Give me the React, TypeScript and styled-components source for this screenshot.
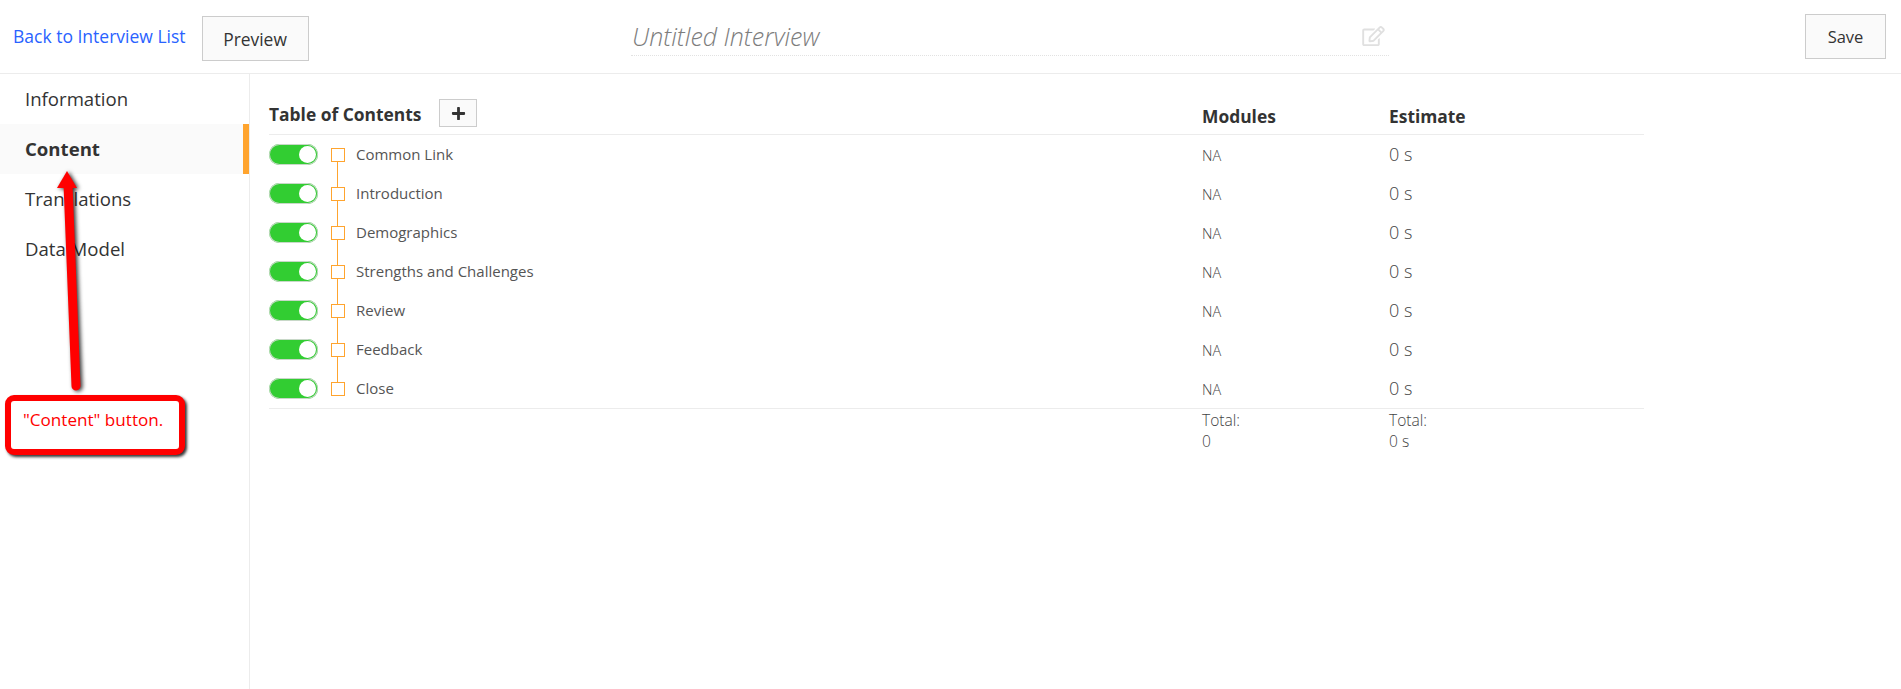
import styled, { createGlobalStyle } from "styled-components";
import { FaRegEdit, FaPlus } from "react-icons/fa";

const GlobalStyle = createGlobalStyle`
  html, body {
    margin: 0;
    height: 100%;
    background: #fff;
    font-family: "Open Sans", "Liberation Sans", sans-serif;
    color: #333;
    overflow: hidden;
  }
  #root {
    height: 100%;
  }
`;

const Page = styled.div`
  position: relative;
  height: 100%;
  display: flex;
  flex-direction: column;
`;

const TopBar = styled.header`
  height: 73px;
  flex: none;
  box-sizing: content-box;
  border-bottom: 1px solid #ececec;
  position: relative;
  display: grid;
  grid-template-columns: 631px 758px 1fr;
  align-items: start;
`;

const TopLeft = styled.div`
  display: flex;
  align-items: flex-start;
  padding-left: 13px;
`;

const BackLink = styled.a`
  color: #2962ff;
  font-size: 17.5px;
  line-height: 24px;
  margin-top: 24px;
  text-decoration: none;
  white-space: nowrap;
`;

const OutlineButton = styled.button`
  background: #fafafa;
  border: 1px solid #ccc;
  color: #333;
  font-family: inherit;
  font-size: 17.4px;
  padding: 0;
  height: 45px;
  cursor: pointer;
`;

const PreviewButton = styled(OutlineButton)`
  width: 107px;
  margin: 16px 0 0 16px;
`;

const SaveButton = styled(OutlineButton)`
  width: 81px;
  margin: 14px 15px 0 0;
  justify-self: end;
  font-size: 16.5px;
`;

const TitleField = styled.div`
  height: 56px;
  box-sizing: border-box;
  border-bottom: 1px dotted #e2e2e2;
  display: flex;
  align-items: center;
  justify-content: space-between;
  padding: 17px 4px 0 1px;
`;

const TitleText = styled.span`
  font-size: 25px;
  font-style: italic;
  font-weight: 300;
  color: #7d7d7d;
  line-height: 30px;
`;

const EditIcon = styled(FaRegEdit)`
  width: 23px;
  height: 20px;
  color: #e0e0e0;
`;

const Body = styled.div`
  flex: 1;
  display: flex;
  min-height: 0;
`;

const Sidebar = styled.nav`
  width: 249px;
  flex: none;
  border-right: 1px solid #ececec;
`;

const NavItem = styled.div<{ $active?: boolean }>`
  height: 50px;
  box-sizing: border-box;
  display: flex;
  align-items: center;
  padding: 0 0 2px 25px;
  font-size: 18.6px;
  font-weight: ${(props) => (props.$active ? 700 : 400)};
  background: ${(props) => (props.$active ? "#fafafa" : "transparent")};
  border-right: 6px solid ${(props) => (props.$active ? "#ffa42e" : "transparent")};
`;

const Main = styled.main`
  padding: 24px 0 0 19px;
  width: 1375px;
  box-sizing: content-box;
`;

const TableRow = styled.div`
  display: grid;
  grid-template-columns: 933px 187px 1fr;
`;

const HeadRow = styled(TableRow)`
  height: 36px;
  border-bottom: 1px solid #ececec;
`;

const TitleCell = styled.div`
  display: flex;
  align-items: flex-start;
  gap: 18px;
`;

const TocTitle = styled.h2`
  margin: 4px 0 0;
  font-size: 17.4px;
  line-height: 24px;
  font-weight: 700;
`;

const AddButton = styled(OutlineButton)`
  width: 38px;
  height: 28px;
  margin-top: 1px;
  display: flex;
  align-items: center;
  justify-content: center;
`;

const ColumnHead = styled.div`
  font-size: 17.4px;
  font-weight: 700;
  line-height: 24px;
  padding-top: 6px;
`;

const BodyRow = styled(TableRow)`
  height: 39px;
  align-items: center;
`;

const SectionCell = styled.div`
  display: flex;
  align-items: center;
`;

const Toggle = styled.span`
  width: 49px;
  height: 21px;
  box-sizing: border-box;
  border-radius: 11px;
  background: #32cd32;
  box-shadow: 0 0 0 1px #c8d8c8 inset;
  display: flex;
  align-items: center;
  justify-content: flex-end;
  padding-right: 2px;
`;

const Knob = styled.span`
  width: 17px;
  height: 17px;
  border-radius: 50%;
  background: #fff;
`;

const Node = styled.span<{ $last?: boolean }>`
  position: relative;
  width: 14px;
  height: 14px;
  box-sizing: border-box;
  border: 1px solid #ffa42e;
  margin: 0 11px 0 13px;

  &::after {
    content: "";
    display: ${(props) => (props.$last ? "none" : "block")};
    position: absolute;
    left: 5px;
    top: 13px;
    width: 1px;
    height: 26px;
    background: #ffa42e;
  }
`;

const SectionName = styled.span`
  font-size: 15px;
  color: #555;
  margin-top: -1px;
`;

const ModuleValue = styled.span`
  font-size: 14.5px;
  color: #444;
  font-weight: 300;
  margin-top: 2px;
`;

const EstimateValue = styled.span`
  font-size: 18px;
  color: #444;
  font-weight: 300;
  margin-top: -2px;
`;

const TotalRow = styled(TableRow)`
  border-top: 1px solid #ececec;
  padding-top: 1px;
`;

const TotalCell = styled.div`
  font-size: 15.6px;
  line-height: 21px;
  color: #444;
  font-weight: 300;
`;

/* red callout drawn over the page */
const Callout = styled.div`
  position: absolute;
  left: 5px;
  top: 395px;
  width: 180px;
  height: 60px;
  box-sizing: border-box;
  border: 6px solid #ff0000;
  border-radius: 9px;
  background: #fff;
  box-shadow: 2px 2px 3px rgba(0, 0, 0, 0.8);
  color: #ff0000;
  font-size: 17.1px;
  line-height: 22px;
  padding: 8px 0 0 12px;
  white-space: nowrap;
`;

const ArrowSvg = styled.svg`
  position: absolute;
  left: 40px;
  top: 160px;
  width: 60px;
  height: 240px;
  overflow: visible;
  filter: drop-shadow(2px 1px 2px rgba(0, 0, 0, 0.8));
`;

const sections = [
  "Common Link",
  "Introduction",
  "Demographics",
  "Strengths and Challenges",
  "Review",
  "Feedback",
  "Close",
];

export default function App() {
  return (
    <Page>
      <GlobalStyle />
      <TopBar>
        <TopLeft>
          <BackLink href="#">Back to Interview List</BackLink>
          <PreviewButton>Preview</PreviewButton>
        </TopLeft>
        <TitleField>
          <TitleText>Untitled Interview</TitleText>
          <EditIcon />
        </TitleField>
        <SaveButton>Save</SaveButton>
      </TopBar>
      <Body>
        <Sidebar>
          <NavItem>Information</NavItem>
          <NavItem $active>Content</NavItem>
          <NavItem>Translations</NavItem>
          <NavItem>Data Model</NavItem>
        </Sidebar>
        <Main>
          <HeadRow>
            <TitleCell>
              <TocTitle>Table of Contents</TocTitle>
              <AddButton aria-label="Add">
                <FaPlus size={15} color="#333" />
              </AddButton>
            </TitleCell>
            <ColumnHead>Modules</ColumnHead>
            <ColumnHead>Estimate</ColumnHead>
          </HeadRow>
          {sections.map((name, i) => (
            <BodyRow key={name}>
              <SectionCell>
                <Toggle>
                  <Knob />
                </Toggle>
                <Node $last={i === sections.length - 1} />
                <SectionName>{name}</SectionName>
              </SectionCell>
              <ModuleValue>NA</ModuleValue>
              <EstimateValue>0 s</EstimateValue>
            </BodyRow>
          ))}
          <TotalRow>
            <div />
            <TotalCell>
              Total:
              <br />0
            </TotalCell>
            <TotalCell>
              Total:
              <br />0 s
            </TotalCell>
          </TotalRow>
        </Main>
      </Body>
      <ArrowSvg viewBox="0 0 60 240">
        <path d="M36 226 L28 24" stroke="#ff0000" strokeWidth="9" strokeLinecap="round" fill="none" />
        <path d="M27 11 L37 28 L17 28 Z" fill="#ff0000" />
      </ArrowSvg>
      <Callout>"Content" button.</Callout>
    </Page>
  );
}
